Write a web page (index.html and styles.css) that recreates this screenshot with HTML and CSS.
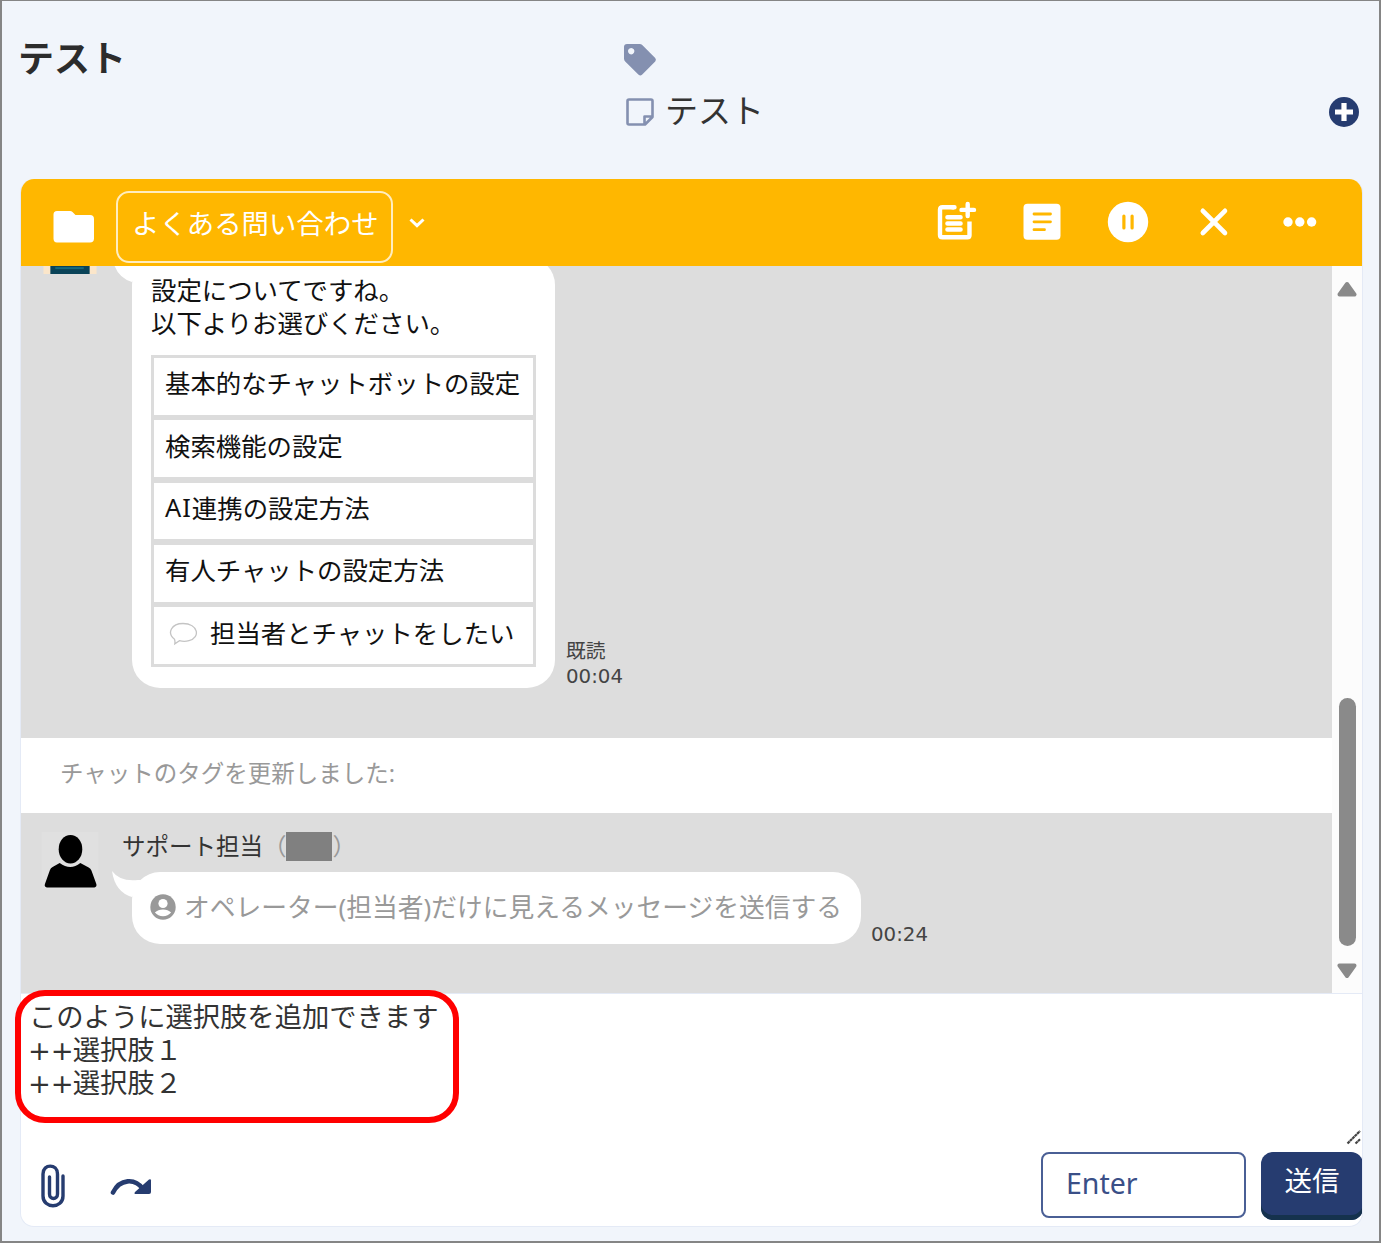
FILE: index.html
```html
<!DOCTYPE html>
<html lang="ja">
<head>
<meta charset="utf-8">
<title>テスト</title>
<link rel="stylesheet" href="styles.css">
</head>
<body>
<div class="page">
  <header class="top">
    <h1 class="title">テスト</h1>
    <div class="meta">
      <svg class="tag-icon" width="34" height="34" viewBox="0 0 34 34"><path fill="#8490b0" fill-rule="evenodd" d="M4 1h12.500q1.800 0 3 1.200L32.200 15q1.500 1.700 0 3.400L19 31.800q-1.700 1.500-3.400 0L2.200 18.500Q1 17.300 1 15.500V4Q1 1 4 1ZM8.200 5a3.200 3.200 0 1 0 .01 0Z"/></svg>
      <div class="memo">
        <svg width="28" height="28" viewBox="0 0 28 28" fill="none" stroke="#8490b0" stroke-width="2.600" stroke-linejoin="round"><path d="M3 1.500h22q1.500 0 1.500 1.500v16l-7.500 7.500H3q-1.500 0-1.500-1.500V3q0-1.500 1.500-1.500ZM18.500 26v-7.500H26"/></svg>
        <span>テスト</span>
      </div>
    </div>
    <svg class="add" width="32" height="32" viewBox="0 0 32 32"><circle cx="16" cy="16" r="15" fill="#263c70"/><path d="M16 7v18M7 16h18" stroke="#fff" stroke-width="5.200"/></svg>
  </header>

  <main class="chat">
    <div class="bar">
      <svg class="folder" width="42" height="34" viewBox="0 0 42 34"><path fill="#fff" d="M4 1h13q1.500 0 2.500 1l3 3H37q4 0 4 4v19.500q0 4-4 4H4q-3.500 0-3.500-4V4.500Q.5 1 4 1Z"/></svg>
      <div class="label">よくある問い合わせ</div>
      <svg class="chevron" width="18" height="12" viewBox="0 0 18 12" fill="none" stroke="#fff" stroke-width="3"><path d="M2.500 2.500 9 8.700l6.500-6.200"/></svg>
      <div class="actions">
        <svg viewBox="0 0 44 44" fill="none" stroke="#fff" stroke-width="4.400" stroke-linecap="round" stroke-linejoin="round"><path d="M20 7.300H8.500Q6 7.300 6 9.800V35q0 2.300 2.500 2.300h25q2 0 2-2V21.500" stroke-linecap="butt"/><path d="M20.500 7.300h-2M33.700 4v12M27.500 9.900h12.500"/><path d="M13.500 17.200h13M13.500 23.500h13M13.500 29.500h13" stroke-width="4.600"/></svg>
        <svg viewBox="0 0 44 44"><rect x="3.500" y="3.700" width="37" height="36" rx="4" fill="#fff"/><path d="M14 14h16.500M14 21.800h16.500M14 29.700h10.500" stroke="#ffb700" stroke-width="2.800" stroke-linecap="round"/></svg>
        <svg viewBox="0 0 44 44"><circle cx="22" cy="22" r="20.200" fill="#fff"/><path d="M17.900 16v12M26.100 16v12" stroke="#ffb700" stroke-width="3.200" stroke-linecap="round"/></svg>
        <svg viewBox="0 0 44 44"><path d="M10.800 10.800 33 33M33 10.800 10.800 33" stroke="#fff" stroke-width="4.600" stroke-linecap="round"/></svg>
        <svg viewBox="0 0 44 44" fill="#fff"><circle cx="10" cy="22" r="4.700"/><circle cx="21.800" cy="22" r="4.700"/><circle cx="33.600" cy="22" r="4.700"/></svg>
      </div>
    </div>

    <div class="log">
      <div class="messages">
        <section class="message first">
          <svg class="avatar" viewBox="0 0 58 58"><path fill="#fbe6ca" d="M2 44h54v14H2z"/><path fill="#0a4358" d="M9 40h40v18H9z"/><path fill="#17697d" d="M14 51h29v2H14z"/></svg>
          <div class="body">
            <div class="name"></div>
            <div class="line">
              <div class="bubble menu">
                <svg class="tail" width="32" height="28" viewBox="0 0 32 28"><path fill="#fff" d="M1 0Q4 21 21 26L32 9H27Q9 11 1 0Z"/></svg>
                <p class="text">設定についてですね。<br>以下よりお選びください。</p>
                <div class="options">
                  <div class="option">基本的なチャットボットの設定</div>
                  <div class="option">検索機能の設定</div>
                  <div class="option"><span class="latin">AI</span>連携の設定方法</div>
                  <div class="option">有人チャットの設定方法</div>
                  <div class="option"><svg class="balloon" width="30" height="24" viewBox="0 0 30 24" fill="none" stroke="#c4c4c4" stroke-width="1.300"><path d="M6.500 17.300C-1.500 11 3.500 1.500 15 1.500c15 0 18 14 6 17.200-4.500 1.100-7 .6-9.500 0l-4.700 3.200c.3-1.800.3-3-.3-4.600Z"/></svg>担当者とチャットをしたい</div>
                </div>
              </div>
              <div class="stamp"><span class="read">既読</span><span>00:04</span></div>
            </div>
          </div>
        </section>
        <div class="notice">チャットのタグを更新しました:</div>
        <section class="message second">
          <svg class="avatar" viewBox="0 0 58 58"><path fill="#e0e0e0" d="M0 0h58v58H0z"/><ellipse cx="29.500" cy="17.500" rx="12" ry="14.500"/><path d="M18.500 31.500Q29.500 39.500 39.500 31.500L48 36q2 1 2.800 3.200L55.800 53q.8 3-2 3.500H5.500q-3-.5-2-3.500L8.500 39q.8-2.200 2.800-3.300Z"/></svg>
          <div class="body">
            <div class="name">サポート担当<span class="who">（<i class="mask"></i>）</span></div>
            <div class="line">
              <div class="bubble note">
                <svg class="tail" width="32" height="28" viewBox="0 0 32 28"><path fill="#fff" d="M1 0Q4 21 21 26L32 9H27Q9 11 1 0Z"/></svg>
                <svg width="26" height="26" viewBox="0 0 26 26"><circle cx="13" cy="13" r="12.700" fill="#999"/><circle cx="13" cy="9.500" r="4.600" fill="#fff"/><path fill="#fff" d="M4.900 18.500Q8 15.600 13 15.600t8.100 2.900Q18 22.200 13 22.200t-8.100-3.700Z"/></svg>
                <span class="note-text">オペレーター(担当者)だけに見えるメッセージを送信する</span>
              </div>
              <div class="stamp"><span>00:24</span></div>
            </div>
          </div>
        </section>
      </div>
      <div class="scrollbar">
        <svg width="20" height="16" viewBox="0 0 20 16"><path fill="#8a8a8a" stroke="#8a8a8a" stroke-width="4" stroke-linejoin="round" d="m10 3 7.500 10.500h-15Z"/></svg>
        <div class="thumb"></div>
        <svg width="20" height="16" viewBox="0 0 20 16"><path fill="#8a8a8a" stroke="#8a8a8a" stroke-width="4" stroke-linejoin="round" d="M10 13 2.500 2.500h15Z"/></svg>
      </div>
    </div>

    <div class="composer">
      <div class="draft">このように選択肢を追加できます<br><span class="plus">++</span>選択肢１<br><span class="plus">++</span>選択肢２
        <svg class="grip" width="16" height="16" viewBox="0 0 16 16" stroke="#444" stroke-width="2.200" stroke-dasharray="3 .4"><path d="M1.500 14.500 14 2M9.500 14.500 14 10.300"/></svg>
      </div>
      <div class="tools">
        <svg class="clip" width="26" height="46" viewBox="0 0 26 46" fill="none" stroke="#263c70" stroke-width="3.400" stroke-linecap="round"><path d="M23 12v20c0 13-20 13-20 0V10C3-.5 17.500-.5 17.500 10v20c0 6-8 6-8 0V13"/></svg>
        <svg class="redo" width="42" height="20" viewBox="0 0 42 20"><path d="M3 15.500C10 1.500 25 1 33 12" fill="none" stroke="#263c70" stroke-width="4.600" stroke-linecap="round"/><path fill="#263c70" d="M39 2.500q2-1 2 1V15q0 2-2 2H26q-2.500 0-1-2Z"/></svg>
        <div class="key">Enter</div>
        <div class="send">送信</div>
      </div>
    </div>
  </main>
  <div class="highlight"></div>
</div>
</body>
</html>
```
FILE: styles.css
```css
* { box-sizing: border-box; }
body { margin: 0; font-family: "Noto Sans", "Noto Sans CJK JP", sans-serif; color: #333; }
svg { display: block; flex: none; }
.page {
  position: relative;
  width: 1381px;
  height: 1243px;
  border: 2px solid #858585;
  border-top-width: 1px;
  background: #f1f5fb;
  padding: 0 16px 0 18px;
  white-space: nowrap;
  overflow: hidden;
}

/* Page header */
.top { display: flex; height: 178px; }
.title { margin: 37px 0 0 -2px; width: 606px; font-size: 36px; line-height: 42px; font-weight: 700; color: #2c2c2c; }
.meta { padding-top: 42px; width: 702px; }
.tag-icon { margin-left: -1px; }
.memo { display: flex; align-items: center; gap: 11px; margin: 14px 0 0 2px; height: 42px; font-size: 33px; line-height: 42px; }
.memo span { padding-bottom: 3px; }
.add { margin: 95px 0 0 2px; }

/* Chat card */
.chat {
  width: 1343px;
  height: 1048px;
  border: 1px solid #e4eaf6;
  border-top: 0;
  border-radius: 14px;
  background: #fff;
  overflow: hidden;
}
.bar { display: flex; align-items: center; height: 87px; background: #ffb700; margin: 0 -1px; padding: 0 20px 0 33px; color: #fff; }
.folder { margin-top: 8px; }
.label { margin: 9px 0 0 21px; width: 277px; height: 72px; border: 2px solid rgba(255,255,255,.75); border-radius: 13px; padding-left: 14px; font-size: 27.400px; line-height: 62px; }
.chevron { margin: 1px 0 0 15px; }
.actions { display: flex; margin-left: auto; margin-top: -1px; }
.actions svg { width: 44px; height: 44px; margin: 0 21px; }

/* Message log */
.log { display: flex; height: 728px; border-bottom: 1px solid #e4eaf6; overflow: hidden; }
.messages { width: 1311px; background: #ddd; overflow: hidden; }
.message { display: flex; padding-left: 20px; }
.first { height: 521px; margin-top: -49px; }
.second { padding-top: 19px; }
.avatar { width: 58px; height: 57px; }
.body { margin-left: 23px; }
.name { height: 40px; font-size: 23.500px; line-height: 29px; }
.who { color: #999; }
.mask { display: inline-block; width: 46px; height: 29px; margin: 0 1px 0 -1px; background: #808080; vertical-align: top; }
.line { display: flex; align-items: flex-end; margin-left: 10px; }
.bubble { position: relative; background: #fff; border-radius: 28px; font-size: 25.400px; }
.tail { position: absolute; left: -21px; top: -1px; }
.menu { width: 423px; height: 431px; padding: 17px 19px 0; color: #111; }
.text { margin: 0; line-height: 33px; }
.options { display: grid; grid-template-rows: repeat(5, 1fr); gap: 5.500px; width: 385px; height: 312px; margin-top: 15px; padding: 3px; background: #dcdcdc; }
.option { display: flex; align-items: center; background: #fff; padding: 0 0 8px 11px; }
.latin { letter-spacing: 1px; }
.balloon { margin: 5px 12px 0 3px; }
.note { display: flex; align-items: center; gap: 8px; width: 729px; height: 72px; padding: 0 0 2px 18px; color: #999; font-size: 25.750px; }
.note-text { padding-bottom: 3px; }
.stamp { display: flex; flex-direction: column; margin-left: 11px; font: 19.800px/25px "DejaVu Sans", "Noto Sans CJK JP", sans-serif; color: #444; }
.menu + .stamp { margin-bottom: -1px; }
.note + .stamp { margin-left: 10px; margin-bottom: -3px; }
.notice { height: 75px; background: #fff; padding-left: 39px; font-size: 23.500px; line-height: 71px; color: #999; }

.scrollbar { display: flex; flex-direction: column; align-items: center; flex: 1; background: #fcfcfc; padding-top: 15px; }
.thumb { width: 17px; height: 248px; margin: 401px 0 17px; border-radius: 9px; background: #8a8a8a; }

/* Composer */
.draft { position: relative; height: 158px; padding: 6px 0 0 8px; font-size: 27.300px; line-height: 33px; }
.plus { font-family: "DejaVu Sans", sans-serif; margin-left: -1px; margin-right: -1px; line-height: 1; }
.grip { position: absolute; right: 0; bottom: 7px; }
.tools { display: flex; align-items: flex-start; margin-right: -1px; }
.clip { margin: 12px 0 0 19px; }
.redo { margin: 25px 0 0 44px; }
.key { margin-left: auto; width: 205px; height: 66px; border: 2px solid #4a5f95; border-radius: 8px; padding-left: 23px; font-size: 28.500px; line-height: 59px; color: #3a4f87; }
.send { margin-left: 15px; width: 102px; height: 68px; border-radius: 12px; background: #263c70; box-shadow: inset 0 -5px #15324d; color: #fff; font-size: 27.500px; line-height: 57px; text-align: center; }

/* Callout around the draft */
.highlight { position: absolute; left: 13px; top: 989px; width: 444px; height: 133px; border: 6px solid #f00; border-radius: 30px; }
```
